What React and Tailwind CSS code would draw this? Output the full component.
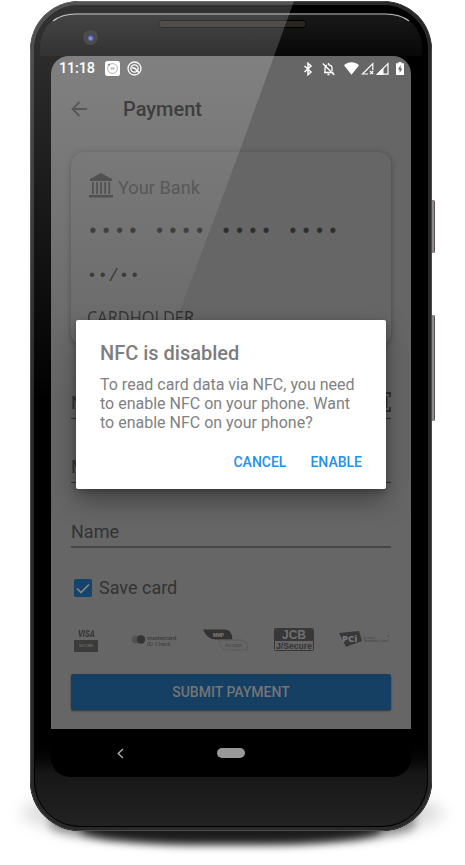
import React from "react";

function StatusBar() {
  return (
    <div className="flex h-[26px] items-center pl-[8px] pr-[7px] text-white">
      <span className="w-[46px] text-[14.5px] font-medium leading-none tracking-[-0.2px]">11:18</span>
      <svg className="-mt-px" width="15" height="15" viewBox="0 0 15 15">
        <rect width="15" height="15" rx="2.5" fill="#fff" />
        <circle cx="7.5" cy="7.5" r="4.9" fill="none" stroke="#999" strokeWidth=".9" />
        <path d="M5.500 7.500h4" stroke="#aaa" strokeWidth="2" />
        <path d="M3.200 4.500 4.700 3" stroke="#555" strokeWidth="1.200" />
      </svg>
      <svg className="-mt-px ml-[7px]" width="15" height="15" viewBox="0 0 15 15" fill="none" stroke="#fff">
        <circle cx="7.500" cy="7.500" r="6.500" strokeWidth="1.300" />
        <circle cx="7.500" cy="7.500" r="3.700" strokeWidth="1.300" />
        <path d="M5 6.500 8 7.500l4 4" strokeWidth="1.500" />
      </svg>
      <div className="-mt-px ml-auto flex items-center">
        <svg width="10" height="14" viewBox="0 0 10 14" fill="none" stroke="#fff" strokeWidth="1.500">
          <path d="M1.5 4 8 10 5 12.7V1.3L8 4 1.5 10" />
        </svg>
        <svg className="ml-[9px]" width="13" height="14" viewBox="0 0 13 14" fill="none" stroke="#fff" strokeWidth="1.3">
          <path d="M2 10.5h9.5M3 10V6.2C3 4.8 3.8 3.4 5 3M10 9V6.2C10 4.300 8.800 2.800 6.500 2.800M6.500 1v2M5.400 12.500h2.200M.8 1.500 12.300 13" />
        </svg>
        <svg className="ml-[9px]" width="15" height="13" viewBox="0 0 15 13" fill="#fff">
          <path d="M0 3.300C4-.8 11-.8 15 3.300L7.500 12.700z" />
        </svg>
        <svg className="ml-[2px]" width="13" height="13" viewBox="0 0 13 13" fill="none" stroke="#fff" strokeWidth="1.2">
          <path d="M7 12H1.500L11.800 1.700V8M9 9l3.200 3.200M12.200 9 9 12.200" />
        </svg>
        <svg className="ml-[2px]" width="13" height="13" viewBox="0 0 13 13">
          <path d="M1.500 12.200 12 1.700v10.500z" fill="none" stroke="#fff" strokeWidth="1.200" />
          <path d="M0 12.800 7.500 5.500v7.300z" fill="#fff" />
        </svg>
        <svg className="ml-[7px]" width="8" height="13" viewBox="0 0 8 13">
          <path d="M2.500 0h3v1.300H8V13H0V1.300h2.500z" fill="#fff" />
          <path d="M4.600 3 2 7.500h1.600V11L6.200 6.400H4.600z" fill="#666" />
        </svg>
      </div>
    </div>
  );
}

function AppBar() {
  return (
    <div className="flex h-[53px] items-center pl-[20px]">
      <svg width="17" height="16" viewBox="0 0 17 16" fill="none" stroke="#3a3a3a" strokeWidth="1.8">
        <path d="M16 8H1.500M8.500 1 1.500 8l7 7" />
      </svg>
      <h1 className="ml-[35px] text-[20px] font-medium leading-none text-[#1c1c1c]">Payment</h1>
    </div>
  );
}

function BankCard() {
  return (
    <div className="mx-[20px] mt-[17px] h-[194px] rounded-[13px] bg-[#666] pl-[16px] text-[#2e2e2e] shadow-[0_1px_6px_rgba(0,0,0,0.3)]">
      <div className="flex h-[71px] items-center pl-[2px]">
        <svg className="-mt-[5px]" width="24" height="25" viewBox="0 0 24 25" fill="#3c3c3c">
          <path d="M12 0 23 6v2H1V6zM0 22h24v2.600H0zM3 9h1.700v12H3zM7.200 9h1.700v12H7.200zM11.200 9h1.700v12h-1.700zM15.300 9H17v12h-1.700zM19.400 9h1.700v12h-1.700z" />
        </svg>
        <span className="ml-[5px] mt-px text-[18.200px] leading-none text-[#444]">Your Bank</span>
      </div>
      <div className="mt-px flex h-[17px] items-center font-['Liberation_Mono',monospace] text-[19.500px] leading-none tracking-[1.630px]">
        •••• •••• •••• ••••
      </div>
      <div className="mt-[27px] flex h-[17px] items-center font-['Liberation_Mono',monospace] text-[17.800px] leading-none">
        <span className="text-[16.500px] tracking-[0.770px]">••</span>
        <span>/</span>
        <span className="text-[16.500px] tracking-[0.770px]">••</span>
      </div>
      <div className="mt-[20px] h-[24px] origin-left scale-x-[0.930] whitespace-nowrap font-['Noto_Sans',sans-serif] text-[17.500px] leading-[24px]">
        CARDHOLDER
      </div>
    </div>
  );
}

function Field({ label, thick, icon }) {
  return (
    <div
      className={
        thick
          ? "mx-[20px] flex h-[65px] items-end justify-between border-b-2 border-[#454545] pb-[4px]"
          : "mx-[20px] flex h-[64px] items-end justify-between border-b border-[#333] pb-[5px]"
      }
    >
      <span className="text-[18px] leading-[20px] text-[#333]">{label}</span>
      {icon && (
        <svg className="mb-[1px]" width="24" height="20" viewBox="0 0 24 20" fill="none" stroke="#333" strokeWidth="1.800">
          <path d="M5 1H1v4M1 15v4h4M19 1h4v4M23 15v4h-4M19.500 4v12" />
        </svg>
      )}
    </div>
  );
}

function Logos() {
  return (
    <div className="ml-[23px] mr-[20px] mt-[30px] flex h-[26px] items-center">
      <div className="flex w-[24px] flex-col items-center">
        <span className="mb-[2px] origin-center scale-x-90 text-[8.500px] font-black italic leading-[8px] text-[#383838]">VISA</span>
        <span className="flex h-[12px] w-[24px] items-center justify-center bg-[#3b3b3b] text-[4px] leading-none text-[#777]">SECURE</span>
      </div>
      <svg className="ml-[34px] -mt-[3px]" width="14" height="10" viewBox="0 0 14 10">
        <circle cx="4" cy="4.500" r="4" fill="#525252" />
        <circle cx="9" cy="4.500" r="4.200" fill="#343434" />
      </svg>
      <div className="ml-[1px] -mt-px flex w-[31px] flex-col whitespace-nowrap font-['Lato',sans-serif] text-[5.900px] leading-[5.900px] text-[#3c3c3c]">
        <b>mastercard</b>
        <span>ID Check</span>
      </div>
      <svg className="ml-[25px] -mt-[3px]" width="46" height="22" viewBox="0 0 46 22">
        <path d="M0 .5h22q7 0 7.500 10H13Q4 10.500 0 .500" fill="#333" />
        <path d="M16 11h22q6 0 7 10H25q-8 0-9-10" fill="none" stroke="#555" strokeWidth=".8" />
        <text x="10" y="7.700" fontSize="5" fontWeight="900" fill="#777">МИР</text>
        <text x="22" y="17.500" fontSize="5.500" fill="#4a4a4a">Accept</text>
      </svg>
      <div className="-mt-[3px] ml-[25px] flex h-[23px] w-[40px] flex-col overflow-hidden rounded-[1.500px] border border-[#383838] text-center font-['Liberation_Sans',sans-serif] font-bold">
        <span className="h-[12px] bg-[#383838] text-[12px] leading-[12px] text-[#707070]">JCB</span>
        <span className="text-[8.600px] leading-[10px] text-[#343434]">J/Secure</span>
      </div>
      <svg className="ml-[25px] -mt-[3px]" width="52" height="17" viewBox="0 0 52 17" fontFamily="Open Sans, sans-serif">
        <path d="M0 2 20 0l3 10-16 6z" fill="#383838" />
        <text x="3" y="11" fontSize="9.500" fontWeight="800" fill="#777">PCi</text>
        <text x="24.500" y="7.500" fontSize="3" fill="#404040">Security</text>
        <text x="24.500" y="11.200" fontSize="3" fill="#404040">Standards Council</text>
        <circle cx="49.500" cy="5" r=".7" fill="#404040" />
      </svg>
    </div>
  );
}

function Dialog() {
  return (
    <div className="absolute left-[25px] top-[264px] h-[169px] w-[310px] rounded-[2px] bg-white pl-[24px] pr-[24px] pt-[21px] shadow-[0_12px_26px_rgba(0,0,0,0.34),0_2px_6px_rgba(0,0,0,0.25)]">
      <h2 className="text-[20px] font-medium leading-[25px] text-[#7b7c7f]">NFC is disabled</h2>
      <p className="mt-[9px] whitespace-nowrap text-[16px] leading-[19px] text-[#808183]">
        To read card data via NFC, you need
        <br />
        to enable NFC on your phone. Want
        <br />
        to enable NFC on your phone?
      </p>
      <div className="mt-[20px] flex justify-end gap-[24px] text-[14px] font-medium leading-[20px] text-[#2491eb]">
        <button>CANCEL</button>
        <button>ENABLE</button>
      </div>
    </div>
  );
}

function Screen() {
  return (
    <div className="relative mx-[21px] h-[721px] w-[360px] overflow-hidden rounded-t-[18px] rounded-b-[19px] bg-black">
      <div className="h-[673px] overflow-hidden bg-[#666]">
        <StatusBar />
        <AppBar />
        <BankCard />
        <div className="mt-[9px]">
          <Field label="Number" icon />
        </div>
        <Field label="MM/YY" />
        <Field label="Name" thick />
        <div className="ml-[23px] mt-[30px] flex h-[20px] items-center">
          <span className="flex h-[18px] w-[18px] items-center justify-center rounded-[2px] bg-[#15436b]">
            <svg width="14" height="11" viewBox="0 0 14 11" fill="none" stroke="#858585" strokeWidth="1.700">
              <path d="M1 5.500 5 9.500 13 1.500" />
            </svg>
          </span>
          <span className="ml-[7px] text-[18px] leading-none text-[#333]">Save card</span>
        </div>
        <Logos />
        <button className="mx-[20px] mt-[20px] flex h-[36px] w-[320px] items-center justify-center rounded-[2px] bg-[#153f63] text-[14px] font-medium text-[#757575] shadow-[0_1px_2px_rgba(0,0,0,0.5)]">
          SUBMIT PAYMENT
        </button>
      </div>
      <div className="flex h-[48px] items-center">
        <svg className="ml-[66px]" width="7" height="11" viewBox="0 0 7 11" fill="none" stroke="#aaa" strokeWidth="1.400">
          <path d="M6 1 1.200 5.500 6 10" />
        </svg>
        <div className="ml-[93px] h-[10px] w-[28px] rounded-full bg-[#999]" />
      </div>
      <Dialog />
    </div>
  );
}

export default function App() {
  return (
    <div className="relative h-[865px] w-[465px] overflow-hidden bg-white font-['Roboto',sans-serif]">
      <div className="absolute left-[22px] top-[786px] h-[54px] w-[421px] rounded-[50%] bg-black/15 blur-[8px]" />
      <div className="absolute left-[50px] top-[800px] h-[43px] w-[365px] rounded-[40%] bg-black/40 blur-[5px]" />
      <div className="absolute left-[80px] top-[815px] h-[29px] w-[302px] rounded-[50%/60%] bg-black/80 blur-[4px]" />
      <div className="absolute left-[431px] top-[200px] h-[53px] w-[4px] rounded-r-[2px] border-r border-[#555] bg-[#918988]" />
      <div className="absolute left-[431px] top-[315px] h-[106px] w-[4px] rounded-r-[2px] border-r border-[#555] bg-[#918988]" />
      <div className="relative ml-[30px] mt-px h-[830px] w-[402px] overflow-hidden rounded-t-[49px] rounded-b-[50px] bg-black">
        <div className="absolute inset-x-0 bottom-0 h-[96px] bg-gradient-to-b from-black via-[#171717] via-40% to-[#232323]" />
        <div className="absolute inset-0 rounded-t-[49px] rounded-b-[50px] border border-[#4a4c48]" />
        <div className="absolute inset-px rounded-t-[48px] rounded-b-[49px] border-[3px] border-[#292929]" />
        <div className="absolute inset-[4px] rounded-t-[45px] rounded-b-[46px] border border-black" />
        <div className="relative h-[55px] w-full">
          <div className="absolute inset-x-[10px] top-[12px] h-[43px] rounded-t-[34px] bg-gradient-to-b from-[#191919] to-[#080808]" />
          <svg className="absolute left-0 top-0" width="402" height="30" viewBox="0 0 402 30" fill="none">
            <path d="M23 20Q32 13 46 13H355Q370 13 379 20" stroke="#b5b9b3" strokeWidth="1.100" />
          </svg>
          <div className="absolute left-[53px] top-[29px] flex h-[15px] w-[15px] items-center justify-center rounded-full bg-[#242424]">
            <div className="h-[8px] w-[8px] rounded-full border border-[#202238] bg-[radial-gradient(circle_at_40%_60%,#7896f0,#3b50b0_45%,#15182f_85%)]" />
          </div>
          <div className="absolute left-[128px] top-[19px] h-[8px] w-[149px] rounded-full border border-black bg-[#29241e]" />
        </div>
        <Screen />
        <div className="flex h-[54px] justify-center pt-[28px]">
          <div className="h-[8px] w-[146px] rounded-full border border-[#080808] bg-[repeating-linear-gradient(90deg,#11110f_0px,#11110f_1px,#292820_1px,#292820_2px)]" />
        </div>
        <svg className="pointer-events-none absolute left-0 top-0" width="402" height="560" viewBox="0 0 402 560">
          <defs>
            <linearGradient id="glare" x1="0" y1="0" x2="0" y2="1">
              <stop offset="0" stopColor="#fff" stopOpacity=".2" />
              <stop offset="1" stopColor="#fff" stopOpacity="0" />
            </linearGradient>
          </defs>
          <path d="M0 0H264L210 149L150 309L130 365L115 400H0z" fill="url(#glare)" />
        </svg>
      </div>
    </div>
  );
}
